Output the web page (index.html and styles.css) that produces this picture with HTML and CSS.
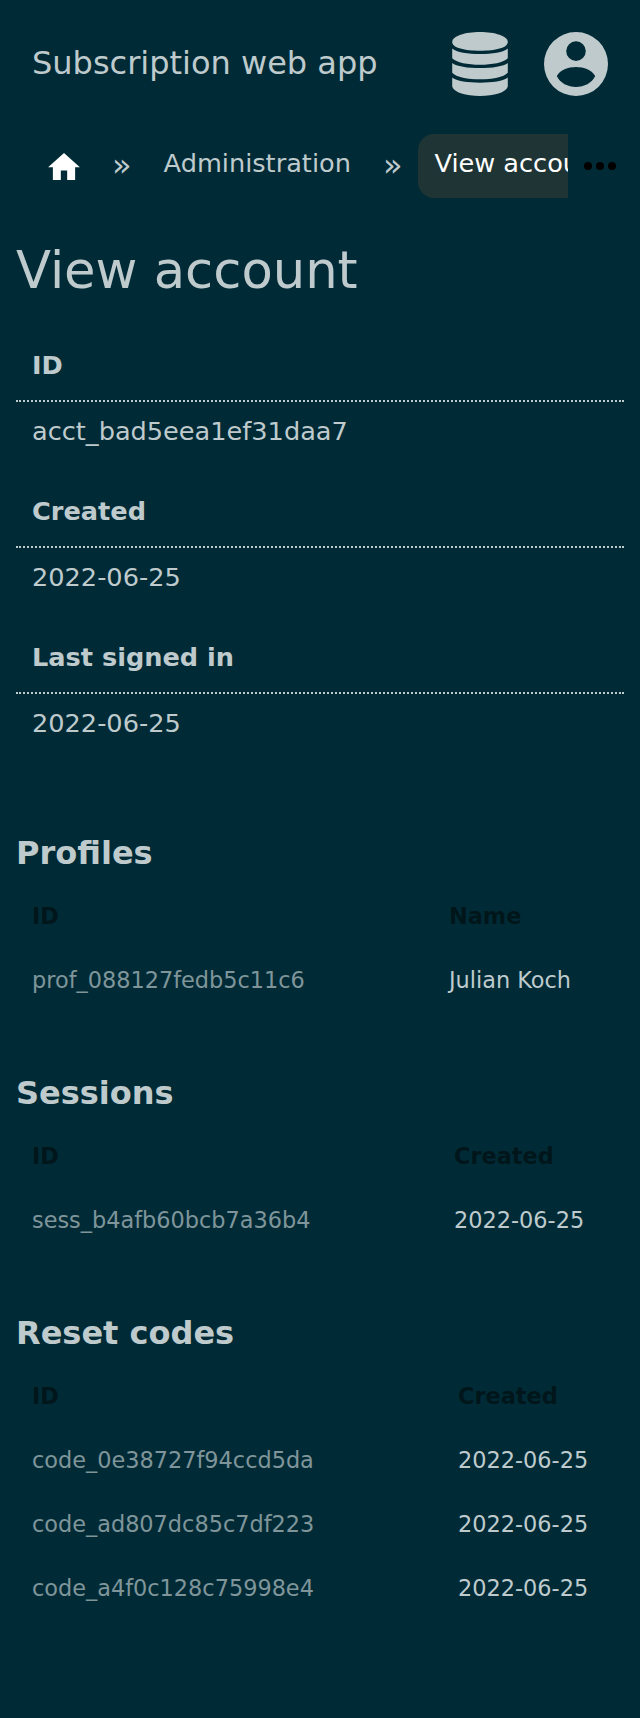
FILE: index.html
```html
<!DOCTYPE html>
<html lang="en">
<head>
<meta charset="utf-8">
<title>View account</title>
<link rel="stylesheet" href="styles.css">
</head>
<body>
<header class="top">
  <a class="brand">Subscription web app</a>
  <svg class="icon-db" viewBox="0 0 56 64" aria-hidden="true">
    <path d="M.2 10C.2 4 13 0 28 0s27.800 4 27.800 10S43 18.700 28 18.700S.2 16 .2 10z"/>
    <path d="M.2 16.500C8 23.900 48 23.900 55.800 16.500V26.200C48 34.900 8 34.900 .2 26.200z"/>
    <path d="M.2 31C8 37.800 48 37.800 55.800 31V40.700C48 49.500 8 49.500 .2 40.700z"/>
    <path d="M.2 45.500C8 52.400 48 52.400 55.800 45.500V54.500C54 60.500 42 64 28 64S2 60.500 .2 54.500z"/>
  </svg>
  <svg class="icon-user" viewBox="0 0 64 64" aria-hidden="true">
    <path fill-rule="evenodd" d="M32 0a32 32 0 1 0 0 64a32 32 0 0 0 0-64zM32 9.300a9.800 9.800 0 1 1 0 19.600a9.800 9.800 0 0 1 0-19.600zM12.800 44C16 38 24 35 32 35s16 3 19.200 9C48 51 40 55 32 55S16 51 12.800 44z"/>
  </svg>
</header>
<nav class="crumbs">
  <div class="trail">
    <a class="home"><svg viewBox="2 3 20 17" aria-hidden="true"><path d="M10 20v-6h4v6h5v-8h3L12 3 2 12h3v8z"/></svg></a>
    <span class="sep">»</span>
    <a class="crumb">Administration</a>
    <span class="sep">»</span>
    <a class="crumb current">View account</a>
  </div>
  <svg class="more" viewBox="0 0 32 8" aria-hidden="true"><circle cx="4" cy="4" r="4"/><circle cx="16" cy="4" r="4"/><circle cx="28" cy="4" r="4"/></svg>
</nav>
<main class="content">
  <h1>View account</h1>
  <dl class="facts">
    <dt>ID</dt><dd>acct_bad5eea1ef31daa7</dd>
    <dt>Created</dt><dd>2022-06-25</dd>
    <dt>Last signed in</dt><dd>2022-06-25</dd>
  </dl>
  <section class="profiles">
    <h2>Profiles</h2>
    <table>
      <tr><th>ID</th><th>Name</th></tr>
      <tr><td class="key">prof_088127fedb5c11c6</td><td>Julian Koch</td></tr>
    </table>
  </section>
  <section class="sessions">
    <h2>Sessions</h2>
    <table>
      <tr><th>ID</th><th>Created</th></tr>
      <tr><td class="key">sess_b4afb60bcb7a36b4</td><td>2022-06-25</td></tr>
    </table>
  </section>
  <section class="codes">
    <h2>Reset codes</h2>
    <table>
      <tr><th>ID</th><th>Created</th></tr>
      <tr><td class="key">code_0e38727f94ccd5da</td><td>2022-06-25</td></tr>
      <tr><td class="key">code_ad807dc85c7df223</td><td>2022-06-25</td></tr>
      <tr><td class="key">code_a4f0c128c75998e4</td><td>2022-06-25</td></tr>
    </table>
  </section>
</main>
</body>
</html>
```
FILE: styles.css
```css
* { box-sizing: border-box; }
body {
  margin: 0;
  min-height: 1718px;
  background: #002b36;
  color: #bfcacd;
  font-family: "DejaVu Sans", sans-serif;
  font-size: 25.6px;
}
.top { display: flex; align-items: center; height: 128px; padding: 0 32px; }
.brand { flex: 1; font-size: 32px; line-height: 38px; padding-bottom: 2px; }
.icon-db { width: 56px; height: 64px; margin-right: 36px; fill: currentColor; }
.icon-user { width: 64px; height: 64px; fill: currentColor; }
.crumbs { display: flex; height: 70px; padding: 6px 24px 0 32px; }
.trail { display: flex; flex: none; width: 536px; overflow: hidden; white-space: nowrap; }
.home { display: flex; flex: none; width: 64px; padding: 19px 16px 0; }
.home svg { display: block; width: 32px; height: 27px; fill: #fff; }
.sep { flex: none; width: 51.6px; font-size: 32px; line-height: 62px; text-align: center; }
.crumb { flex: none; height: 64px; padding: 0 16px; line-height: 58px; }
.current { border-radius: 16px 0 0 16px; background: #1f3535; color: #fff; }
.more { width: 32px; height: 8px; margin: 28px 0 0 16px; fill: #000; }
.content { padding: 0 16px; }
h1 { height: 132px; margin: 0; font-size: 51.2px; font-weight: 400; line-height: 144px; }
.facts { margin: 0; }
dt { height: 72px; padding: 0 16px; border-bottom: 2px dotted; font-weight: 700; line-height: 70px; }
dd { height: 58px; margin: 0 0 16px; padding: 0 16px; line-height: 58px; }
section { padding-top: 62px; }
.profiles { padding-top: 66px; }
h2 { margin: 0; height: 50px; font-size: 32px; line-height: 38px; }
table { width: 608px; table-layout: fixed; border-collapse: collapse; font-size: 22.4px; }
th, td { height: 64px; padding: 0 16px; text-align: left; line-height: 26px; }
th { color: #00161b; }
th:first-child { width: 417px; }
.sessions th:first-child { width: 422px; }
.codes th:first-child { width: 426px; }
.key { color: #7f959a; }
```
